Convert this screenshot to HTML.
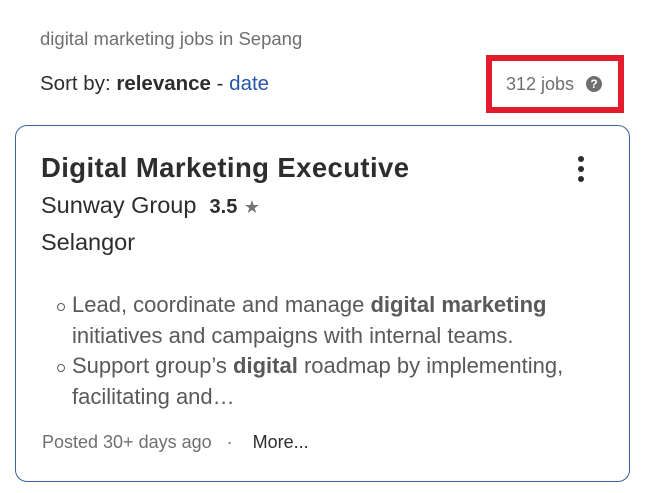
<!DOCTYPE html>
<html><head><meta charset="utf-8"><style>
body{margin:0;width:648px;height:493px;background:#fff;font-family:"Liberation Sans",sans-serif;position:relative;overflow:hidden;color:#2d2d2d}
.a{position:absolute;white-space:nowrap}
.b{position:absolute;left:-15px;top:13px;width:6px;height:6px;border:1.5px solid #595959;border-radius:50%}
</style></head><body>
<div class="a" style="left:40px;top:28px;font-size:18.5px;color:#6f6f6f">digital marketing jobs in Sepang</div>
<div class="a" style="left:40px;top:72px;font-size:20.5px;color:#2d2d2d">Sort by: <b>relevance</b> - <span style="color:#2557a7">date</span></div>
<div class="a" style="left:486px;top:55px;width:126px;height:46px;border:6px solid #e21c2a"></div>
<div class="a" style="left:506px;top:74px;font-size:18px;color:#6f6f6f">312 jobs</div>
<div class="a" style="left:586px;top:76px;width:16px;height:16px;border-radius:50%;background:#6f6f6f;color:#fff;font-size:12px;font-weight:bold;text-align:center;line-height:16px">?</div>
<div class="a" style="left:15px;top:125px;width:613px;height:355px;border:1px solid #3b63a0;border-radius:12px"></div>
<div class="a" style="left:41px;top:152px;font-size:27.5px;font-weight:bold;color:#2d2d2d;letter-spacing:0.4px">Digital Marketing Executive</div>
<div class="a" style="left:578px;top:156px;width:6px;height:6px;border-radius:50%;background:#2d2d2d;box-shadow:0 10px 0 #2d2d2d,0 20px 0 #2d2d2d"></div>
<div class="a" style="left:41px;top:192px;font-size:23.5px">Sunway Group &nbsp;<b style="font-size:20px">3.5</b> <span style="color:#767676;font-size:18px">★</span></div>
<div class="a" style="left:41px;top:229px;font-size:23.5px">Selangor</div>
<div class="a" style="left:72px;top:290px;font-size:22px;line-height:30.5px;color:#595959">
<div style="position:relative"><span class="b"></span>Lead, coordinate and manage <b>digital marketing</b></div>
<div>initiatives and campaigns with internal teams.</div>
<div style="position:relative"><span class="b"></span>Support group’s <b>digital</b> roadmap by implementing,</div>
<div>facilitating and…</div>
</div>
<div class="a" style="left:42px;top:432px;font-size:18px;color:#6f6f6f">Posted 30+ days ago &nbsp;&nbsp;·&nbsp;&nbsp;&nbsp; <span style="color:#2d2d2d">More...</span></div>
</body></html>
